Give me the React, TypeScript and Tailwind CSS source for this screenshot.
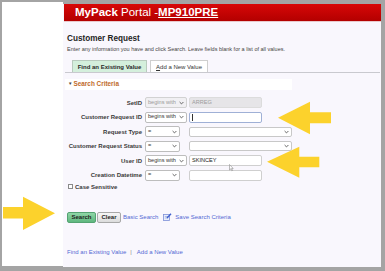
import React from "react";

function Chevron() {
  return (
    <svg width="5" height="4" viewBox="0 0 5 4" className="shrink-0">
      <path d="M0.6 1 L2.5 2.9 L4.4 1" fill="none" stroke="#555" strokeWidth="0.9" />
    </svg>
  );
}

type Row = {
  label: string;
  sel: string;
  selW: string;
  selDisabled?: boolean;
  kind: "input" | "select";
  inW: string;
  text?: string;
  inDisabled?: boolean;
  focused?: boolean;
};

const rows: Row[] = [
  { label: "SetID", sel: "begins with", selW: "w-[42px]", selDisabled: true, kind: "input", inW: "w-[73px]", text: "ARREG", inDisabled: true },
  { label: "Customer Request ID", sel: "begins with", selW: "w-[42px]", kind: "input", inW: "w-[73px]", focused: true },
  { label: "Request Type", sel: "=", selW: "w-[35px]", kind: "select", inW: "w-[103px]" },
  { label: "Customer Request Status", sel: "=", selW: "w-[35px]", kind: "select", inW: "w-[103px]" },
  { label: "User ID", sel: "begins with", selW: "w-[42px]", kind: "input", inW: "w-[73px]", text: "SKINCEY" },
  { label: "Creation Datetime", sel: "=", selW: "w-[35px]", kind: "input", inW: "w-[73px]" },
];

function FormRow({ r }: { r: Row }) {
  return (
    <div className="h-[14.5px] flex items-center">
      <div className="w-[79px] text-right font-bold text-[6px] leading-none text-[#3a3a3a] pr-0">{r.label}</div>
      <div className="w-[3px]" />
      <div className="w-[44px] flex">
        <div
          className={`${r.selW} h-[11px] flex items-center justify-between pl-[2px] pr-[2px] border rounded-[2px] text-[5.6px] leading-none ${
            r.selDisabled ? "bg-[#f1f0f3] border-[#d2d2d2] text-[#9a9a9a]" : "bg-white border-[#bdbdbd] text-[#333]"
          }`}
        >
          <span>{r.sel}</span>
          <Chevron />
        </div>
      </div>
      {r.kind === "select" ? (
        <div className={`${r.inW} h-[10px] flex items-center justify-end pr-[2px] bg-white border border-[#c8c8c8] rounded-[2px]`}>
          <Chevron />
        </div>
      ) : (
        <div
          className={`${r.inW} h-[11px] flex items-center pl-[2px] border rounded-[2px] text-[5.6px] leading-none ${
            r.inDisabled
              ? "bg-[#e6e5e8] border-[#dcdcdc] text-[#9c9c9c]"
              : r.focused
              ? "bg-white border-[#9fb0d6] text-[#222]"
              : "bg-white border-[#cfcfcf] text-[#222]"
          }`}
        >
          {r.focused ? <div className="w-[1px] h-[7px] bg-[#333]" /> : <span>{r.text}</span>}
        </div>
      )}
    </div>
  );
}

export default function App() {
  return (
    <div className="relative w-[385px] h-[271px] bg-[#a4a4a4] overflow-hidden flex items-start pl-[2px] pt-[2px] font-['Liberation_Sans',Arial,sans-serif]">
      <div className="w-[61px] h-[264px] bg-white" />
      <div className="mt-[2px] w-[318px] h-[263px] bg-[#f9f7fd] flex flex-col">
        {/* header */}
        <div className="ml-[1px] h-[17px] bg-gradient-to-b from-[#d80808] to-[#b30000] flex items-center pl-[11px] text-white text-[11.5px] leading-none">
          <span className="font-bold">MyPack</span>
          <span>&nbsp;Portal -</span>
          <span className="font-bold underline">MP910PRE</span>
        </div>
        <div className="ml-[1px] h-[1px] bg-[#e9c9cc]" />

        {/* title */}
        <div className="mt-[12px] pl-[4px] h-[10px] flex items-center text-[8.2px] font-bold text-[#252525] leading-none">
          Customer Request
        </div>
        <div className="mt-[3px] pl-[4px] h-[6px] flex items-center text-[5.5px] text-[#444] leading-none whitespace-nowrap">
          Enter any information you have and click Search. Leave fields blank for a list of all values.
        </div>

        {/* tabs */}
        <div className="mt-[7px] ml-[2px] mr-[1px] h-[13px] flex items-end pl-[7px] gap-[3px] border-b border-[#c9c9cf]">
          <div className="w-[75px] h-[12px] flex items-center justify-center bg-[#d4efdc] border border-b-0 border-[#b9cabe] text-[6px] font-bold text-[#2a2a2a] leading-none">
            Find an Existing Value
          </div>
          <div className="w-[58px] h-[12px] flex items-center justify-center bg-white border border-b-0 border-[#cfcfcf] text-[6px] text-[#333] leading-none">
            <span className="underline">A</span>dd a New Value
          </div>
        </div>

        {/* search criteria */}
        <div className="mt-[6px] ml-[2px] w-[227px] h-[11px] bg-white flex items-center pl-[3px] gap-[1px] leading-none">
          <span className="text-[4.5px] text-[#444]">▼</span>
          <span className="text-[6.4px] font-bold text-[#c06a2a]">Search Criteria</span>
        </div>

        {/* rows */}
        <div className="mt-[5.5px] flex flex-col">
          {rows.map((r) => (
            <FormRow key={r.label} r={r} />
          ))}
        </div>

        {/* case sensitive */}
        <div className="mt-[0px] pl-[5px] h-[8px] flex items-center gap-[2px] leading-none">
          <div className="w-[5px] h-[5px] border border-[#8a8a8a] bg-white" />
          <span className="text-[6px] font-bold text-[#3a3a3a]">Case Sensitive</span>
        </div>

        {/* buttons */}
        <div className="mt-[21px] pl-[4px] h-[11px] flex items-center leading-none">
          <div className="w-[29px] h-[11px] flex items-center justify-center rounded-[2px] border border-[#54a372] bg-gradient-to-b from-[#8fd6a6] to-[#5fb77f] text-[6px] font-bold text-[#1f1f1f]">
            Search
          </div>
          <div className="ml-[1px] w-[24px] h-[11px] flex items-center justify-center rounded-[2px] border border-[#a8a8a8] bg-gradient-to-b from-[#f7f7f7] to-[#dcdcdc] text-[6px] font-bold text-[#1f1f1f]">
            Clear
          </div>
          <span className="ml-[2px] text-[6px] text-[#5469d4]">Basic Search</span>
          <svg width="9" height="8" viewBox="0 0 9 8" className="ml-[5px]">
            <rect x="0.5" y="1.5" width="6" height="6" fill="#e9eefc" stroke="#7d8fd8" strokeWidth="0.8" />
            <path d="M1.8 3.5 H5 M1.8 5 H5" stroke="#8b9ad8" strokeWidth="0.6" />
            <path d="M4 5 L8 0.8" stroke="#3f5fcf" strokeWidth="1.4" />
          </svg>
          <span className="ml-[3px] text-[6px] text-[#5469d4]">Save Search Criteria</span>
        </div>

        {/* bottom links */}
        <div className="mt-[25px] pl-[4px] h-[8px] flex items-center leading-none text-[6px] text-[#5469d4]">
          <span>Find an Existing Value</span>
          <span className="ml-[4px] text-[#888]">|</span>
          <span className="ml-[5px]">Add a New Value</span>
        </div>
      </div>

      {/* overlays: arrows and mouse cursor */}
      <svg className="absolute left-0 top-0" width="385" height="271" viewBox="0 0 385 271">
        <polygon points="278,117.7 310,101.7 310,112.3 331,112.3 331,123.3 310,123.3 310,134.3" fill="#fcd22c" />
        <polygon points="267,161.7 299.3,146.7 299.3,156.7 319.3,156.7 319.3,167.3 299.3,167.3 299.3,177.7" fill="#fcd22c" />
        <polygon points="3,207 23,207 23,196.7 55,213.3 23,230 23,218.5 3,218.5" fill="#fcd22c" />
        <path d="M229.5 164.5 L229.5 170 L230.8 168.8 L231.8 170.8 L232.6 170.4 L231.6 168.5 L233.2 168.5 Z" fill="#fff" stroke="#777" strokeWidth="0.5" />
      </svg>
    </div>
  );
}
